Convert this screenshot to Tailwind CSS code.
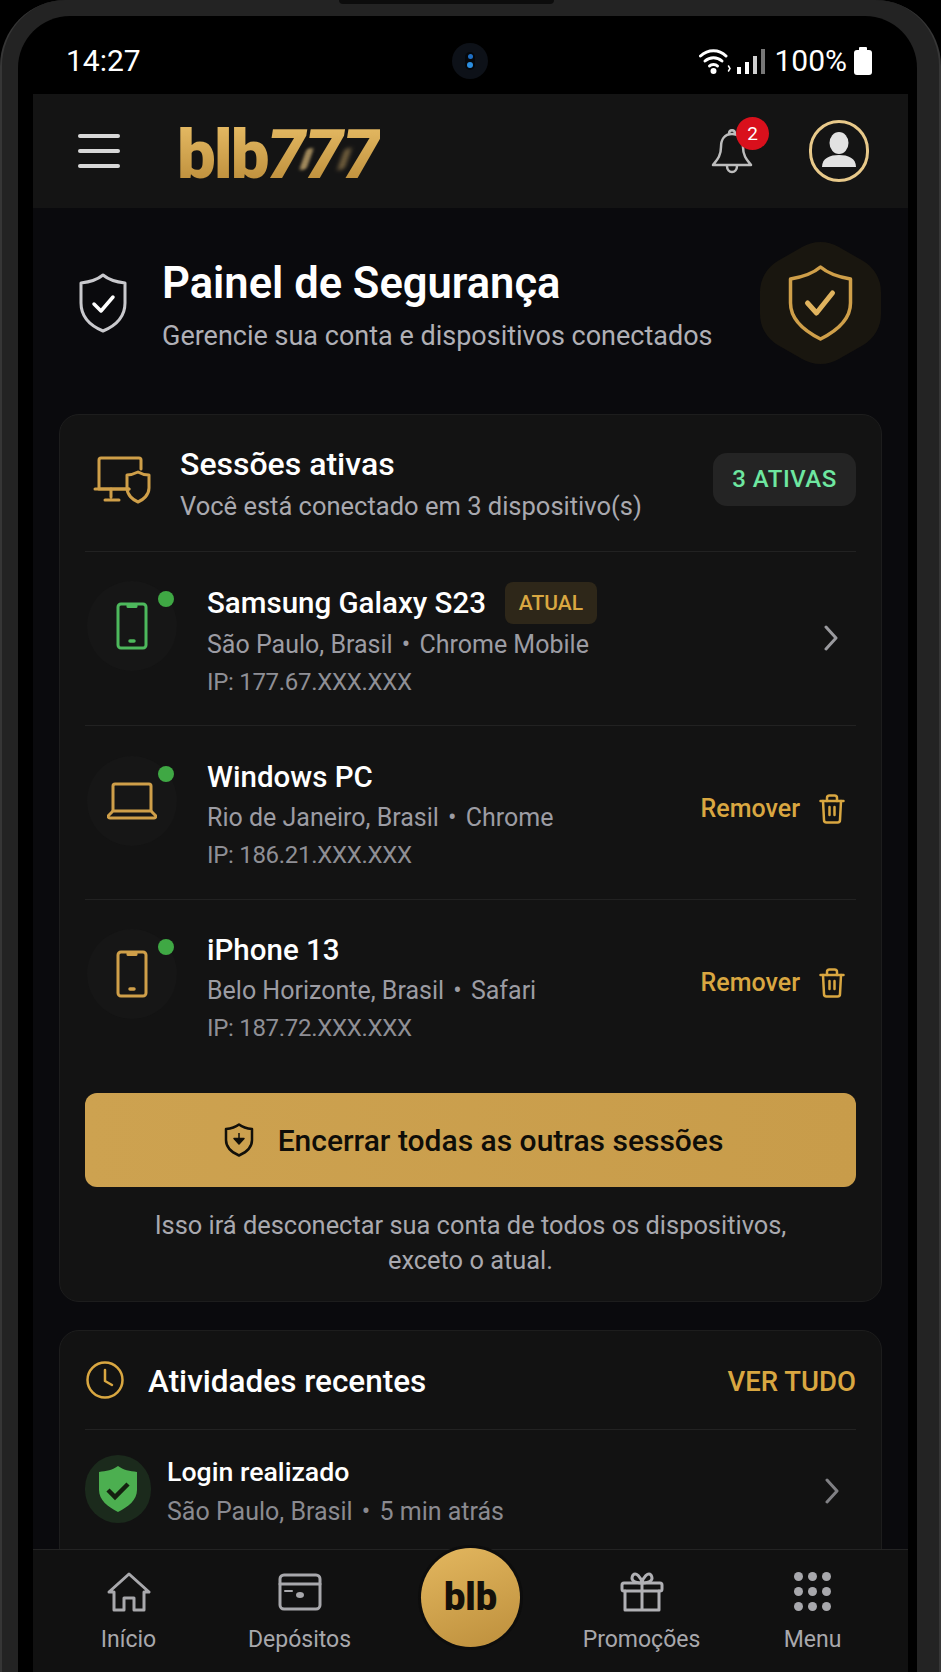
<!DOCTYPE html>
<html lang="pt-BR">

<head>
    <meta charset="UTF-8">
    <meta name="viewport" content="width=device-width, initial-scale=1.0">
    <title>Painel de Segurança</title>
    <script src="https://cdn.jsdelivr.net/npm/@tailwindcss/browser@4"></script>
</head>

<body class="bg-black">
    <!-- phone frame -->
    <div class="w-[941px] h-[1672px] overflow-hidden bg-black font-['Roboto',sans-serif]">
        <div class="w-full h-full rounded-t-[66px] bg-[#232323] border-x-2 border-[#363636] pt-[16px] pl-[16px] pr-[22px] relative">
            <div class="absolute top-0 left-[337px] w-[215px] h-[4px] rounded-b bg-[#0c0c0c]"></div>
            <div class="h-full rounded-t-[52px] bg-black pl-[15px] pr-[9px] overflow-hidden">

                <!-- status bar -->
                <div class="h-[78px] flex items-center relative text-white text-[30px] leading-[36px] pt-[12px]">
                    <span class="ml-[33px]">14:27</span>
                    <div class="absolute left-[419px] top-[27px] w-[36px] h-[36px] rounded-full bg-[#0d1118] flex items-center justify-center">
                        <div class="w-[10px] h-[18px] rounded-full bg-[#05080c] flex flex-col items-center justify-between py-[2px]">
                            <div class="w-[5px] h-[5px] rounded-full bg-[#1f6fc4]"></div>
                            <div class="w-[6px] h-[6px] rounded-full bg-[#2b8ee0]"></div>
                        </div>
                    </div>
                    <div class="ml-auto flex items-center mr-[36px]">
                        <svg class="w-[32px] h-[26px]" viewBox="0 0 32 26" fill="none" stroke="#fff" stroke-width="3" stroke-linecap="round">
                            <path d="M1.500 8C9 1 20 1 27 8" />
                            <path d="M6 13C11 8.500 18 8.500 23 13" />
                            <path d="M10.500 18C12.500 16 16.500 16 18.500 18" />
                            <circle cx="14.500" cy="23" r="1.500" fill="#fff" />
                            <path d="M29.500 18l1.500 2.500-1.500 2.500" stroke-width="1.500" />
                        </svg>
                        <svg class="w-[28px] h-[26px] ml-[6px]" viewBox="0 0 28 26" fill="#fff">
                            <rect x="0" y="19" width="4" height="7" />
                            <rect x="8" y="14" width="4" height="12" />
                            <rect x="16" y="8" width="4" height="18" fill="#cfcfcf" />
                            <rect x="24" y="1" width="4" height="25" fill="#777" />
                        </svg>
                        <span class="ml-[9px]">100%</span>
                        <svg class="w-[18px] h-[28px] ml-[7px]" viewBox="0 0 18 28" fill="#fff">
                            <rect x="5" y="0" width="8" height="4" rx="1" />
                            <rect x="0" y="3" width="18" height="25" rx="3" />
                        </svg>
                    </div>
                </div>

                <!-- header -->
                <div class="h-[114px] bg-[#141414] flex items-center relative">
                    <div class="ml-[45px] w-[42px] flex flex-col gap-[11px]">
                        <div class="h-[4px] rounded-full bg-[#d8d8d8]"></div>
                        <div class="h-[4px] rounded-full bg-[#d8d8d8]"></div>
                        <div class="h-[4px] rounded-full bg-[#d8d8d8]"></div>
                    </div>
                    <div class="ml-[57px] relative flex items-baseline leading-[70px] text-[69px] font-black tracking-[-2px] text-transparent bg-clip-text bg-[linear-gradient(180deg,#e8bd66,#b98a37)] mt-[8px]">
                        <span>blb</span><span class="italic tracking-[-1px] ml-[-1px]">777</span>
                        <div class="absolute left-[126px] top-[28px] w-[7px] h-[22px] -skew-x-[20deg] rounded-sm bg-[#d9b878]/70 blur-[1.5px]"></div>
                        <div class="absolute left-[164px] top-[28px] w-[7px] h-[22px] -skew-x-[20deg] rounded-sm bg-[#a98a55]/60 blur-[2px]"></div>
                    </div>
                    <div class="ml-auto relative w-[42px] h-[46px] mr-[56px]">
                        <svg class="w-[42px] h-[46px]" viewBox="0 0 42 46" fill="none" stroke="#bdbdbd" stroke-width="2.500" stroke-linejoin="round" stroke-linecap="round">
                            <path d="M21 6C13 6 10 12 10 19C10 28 6 32 2 37H40C36 32 32 28 32 19C32 12 29 6 21 6Z" />
                            <path d="M18 6C18 1 24 1 24 6" />
                            <path d="M16 38C16 46 26 46 26 38" />
                        </svg>
                        <div class="absolute left-[25px] top-[-11px] w-[33px] h-[33px] rounded-full bg-[#d9101c] text-white text-[19px] leading-[33px] text-center">2</div>
                    </div>
                    <div class="w-[60px] h-[62px] rounded-full border-[3px] border-[#e8c98a] mr-[39px] overflow-hidden flex items-center justify-center">
                        <svg class="w-[54px] h-[56px]" viewBox="0 0 54 56" fill="#e2e2e2">
                            <ellipse cx="27" cy="20" rx="9.500" ry="11" />
                            <path d="M10 44C10 35 18 32 27 32C36 32 44 35 44 44Z" />
                        </svg>
                    </div>
                </div>

                <!-- main -->
                <div class="h-[1341px] overflow-hidden bg-[#0a0a0d] px-[26px] pt-[32px]">

                    <div class="flex items-center h-[126px]">
                        <svg class="w-[48px] h-[60px] ml-[20px] shrink-0" viewBox="0 0 48 60" fill="none" stroke="#c9c9cd" stroke-width="3" stroke-linejoin="round" stroke-linecap="round">
                            <path d="M24 2C30 7 37 9 46 10V30C46 44 36 53 24 58C12 53 2 44 2 30V10C11 9 18 7 24 2Z" />
                            <path d="M15 31l7 7 12-14" stroke="#fff" stroke-width="3.500" />
                        </svg>
                        <div class="ml-[35px] mt-[8px]">
                            <h1 class="text-[43.500px] leading-[48px] font-semibold text-white">Painel de Segurança</h1>
                            <p class="text-[27px] leading-[36px] mt-[10px] text-[#b0b0b6]">Gerencie sua conta e dispositivos conectados</p>
                        </div>
                        <svg class="ml-auto w-[121px] h-[126px] shrink-0 mr-[1px]" viewBox="0 0 121 126">
                            <path d="M60.500 38L85 52V74L60.500 88L36 74V52Z" fill="#19160f" stroke="#19160f" stroke-width="72" stroke-linejoin="round" />
                            <g transform="translate(28.500 25)" fill="none" stroke="#cf9f49" stroke-width="3.500" stroke-linejoin="round" stroke-linecap="round">
                                <path d="M32 2C39 8 50 12 62 14V38C62 54 48 66 32 74C16 66 2 54 2 38V14C14 12 25 8 32 2Z" />
                                <path d="M19 38l9 10 16-20" stroke="#e0b35e" stroke-width="5" />
                            </g>
                        </svg>
                    </div>

                    <!-- active sessions -->
                    <div class="mt-[48px] rounded-[20px] bg-[#131313] border border-[#1d1d1d] px-[25px] pb-[23px]">
                        <div class="h-[136px] flex pt-[30px]">
                            <svg class="w-[58px] h-[48px] ml-[8px] mt-[11px] shrink-0" viewBox="0 0 58 48" fill="none" stroke="#cf9f49" stroke-width="3" stroke-linejoin="round" stroke-linecap="round">
                                <path d="M36 33H6V4C6 2.500 7 2 8 2H46C47 2 48 2.500 48 4V13" />
                                <path d="M2 33H36" />
                                <path d="M18 41V33M12 44H26" />
                                <path d="M34 19C39 19 45 16 45 16C45 16 50 19 56 19V32C56 39 50 44 45 46C40 44 34 39 34 32Z" />
                            </svg>
                            <div class="ml-[29px]">
                                <h2 class="text-[32px] leading-[38px] font-medium text-white">Sessões ativas</h2>
                                <p class="text-[25.500px] leading-[38px] mt-[4px] text-[#a9a9af]">Você está conectado em 3 dispositivo(s)</p>
                            </div>
                            <div class="ml-auto mt-[8px] h-[53px] w-[143px] rounded-[14px] bg-[#242424] text-[#6ee7a0] text-[24px] leading-[53px] font-medium text-center tracking-[0.5px]">3 ATIVAS</div>
                        </div>

                        <!-- devices -->
                        <div class="h-[174px] border-t border-[#222222] flex items-center relative">
                            <div class="self-start mt-[29px] ml-[2px] w-[90px] h-[90px] rounded-full bg-[#161616] flex items-center justify-center relative shrink-0">
                                <svg class="w-[32px] h-[48px]" viewBox="0 0 32 48" fill="none" stroke="#4db85c" stroke-width="3" stroke-linejoin="round">
                                    <rect x="2" y="2" width="28" height="44" rx="3" />
                                    <path d="M12 2.500h8v2h-8z" fill="#4db85c" />
                                    <path d="M14 39h4" stroke-width="3.500" stroke-linecap="round" />
                                </svg>
                                <div class="absolute left-[71px] top-[10px] w-[16px] h-[16px] rounded-full bg-[#3fa844]"></div>
                            </div>
                            <div class="self-start ml-[30px] pt-[33px]">
                                <div class="flex items-center h-[36px]">
                                    <span class="text-[29.500px] leading-[36px] font-medium text-white">Samsung Galaxy S23</span>
                                    <span class="ml-[19px] h-[42px] w-[92px] rounded-[8px] bg-[#2e2719] text-[#d9a741] text-[21px] leading-[42px] font-medium text-center">ATUAL</span>
                                </div>
                                <p class="text-[25px] leading-[38px] mt-[5px] text-[#9c9ca3]">São Paulo, Brasil<span class="mx-[3px]"> • </span>Chrome Mobile</p>
                                <p class="text-[24px] leading-[38px] mt-[-1px] tracking-[-0.3px] text-[#8f8f95]">IP: 177.67.XXX.XXX</p>
                            </div>
                            <svg class="ml-auto mr-[18px] mb-[2px] w-[14px] h-[26px]" viewBox="0 0 14 26" fill="none" stroke="#9a9a9e" stroke-width="3" stroke-linecap="round" stroke-linejoin="round">
                                <path d="M2 2l10 11-10 11" />
                            </svg>
                        </div>

                        <div class="h-[174px] border-t border-[#222222] flex items-center relative">
                            <div class="self-start mt-[30px] ml-[2px] w-[90px] h-[90px] rounded-full bg-[#161616] flex items-center justify-center relative shrink-0">
                                <svg class="w-[50px] h-[38px]" viewBox="0 0 50 38" fill="none" stroke="#cf9f49" stroke-width="3" stroke-linejoin="round">
                                    <path d="M6 29V4C6 2.500 7 2 8 2H42C43 2 44 2.500 44 4V29" />
                                    <path d="M6 29H44L49 34C49 35 48 36 47 36H3C2 36 1 35 1 34Z" />
                                </svg>
                                <div class="absolute left-[71px] top-[10px] w-[16px] h-[16px] rounded-full bg-[#3fa844]"></div>
                            </div>
                            <div class="self-start ml-[30px] pt-[33px]">
                                <p class="text-[29.500px] leading-[36px] font-medium text-white">Windows PC</p>
                                <p class="text-[25px] leading-[38px] mt-[4px] text-[#9c9ca3]">Rio de Janeiro, Brasil<span class="mx-[3px]"> • </span>Chrome</p>
                                <p class="text-[24px] leading-[38px] mt-[-1px] tracking-[-0.3px] text-[#8f8f95]">IP: 186.21.XXX.XXX</p>
                            </div>
                            <div class="ml-auto mr-[11px] mb-[7px] flex items-center gap-[19px]">
                                <span class="text-[25px] leading-[32px] font-medium text-[#d9a741]">Remover</span>
                                <svg class="w-[26px] h-[30px]" viewBox="0 0 26 30" fill="none" stroke="#d9a741" stroke-width="2.500" stroke-linejoin="round" stroke-linecap="round">
                                    <path d="M1.500 7H24.500" />
                                    <path d="M8 7V4C8 2.500 9 1.500 10.500 1.500H15.500C17 1.500 18 2.500 18 4V7" />
                                    <path d="M4 7L5 26C5 27.500 6 28.500 7.500 28.500H18.500C20 28.500 21 27.500 21 26L22 7" />
                                    <path d="M10.500 13V21M15.500 13V21" />
                                </svg>
                            </div>
                        </div>

                        <div class="h-[173px] border-t border-[#222222] flex items-center relative">
                            <div class="self-start mt-[29px] ml-[2px] w-[90px] h-[90px] rounded-full bg-[#161616] flex items-center justify-center relative shrink-0">
                                <svg class="w-[32px] h-[48px]" viewBox="0 0 32 48" fill="none" stroke="#cf9f49" stroke-width="3" stroke-linejoin="round">
                                    <rect x="2" y="2" width="28" height="44" rx="3" />
                                    <path d="M12 2.500h8v2h-8z" fill="#cf9f49" />
                                    <path d="M14 39h4" stroke-width="3.500" stroke-linecap="round" />
                                </svg>
                                <div class="absolute left-[71px] top-[10px] w-[16px] h-[16px] rounded-full bg-[#3fa844]"></div>
                            </div>
                            <div class="self-start ml-[30px] pt-[32px]">
                                <p class="text-[29.500px] leading-[36px] font-medium text-white">iPhone 13</p>
                                <p class="text-[25px] leading-[38px] mt-[4px] text-[#9c9ca3]">Belo Horizonte, Brasil<span class="mx-[3px]"> • </span>Safari</p>
                                <p class="text-[24px] leading-[38px] mt-[-1px] tracking-[-0.3px] text-[#8f8f95]">IP: 187.72.XXX.XXX</p>
                            </div>
                            <div class="ml-auto mr-[11px] mb-[6px] flex items-center gap-[19px]">
                                <span class="text-[25px] leading-[32px] font-medium text-[#d9a741]">Remover</span>
                                <svg class="w-[26px] h-[30px]" viewBox="0 0 26 30" fill="none" stroke="#d9a741" stroke-width="2.500" stroke-linejoin="round" stroke-linecap="round">
                                    <path d="M1.500 7H24.500" />
                                    <path d="M8 7V4C8 2.500 9 1.500 10.500 1.500H15.500C17 1.500 18 2.500 18 4V7" />
                                    <path d="M4 7L5 26C5 27.500 6 28.500 7.500 28.500H18.500C20 28.500 21 27.500 21 26L22 7" />
                                    <path d="M10.500 13V21M15.500 13V21" />
                                </svg>
                            </div>
                        </div>

                        <button class="mt-[21px] w-full h-[94px] rounded-[12px] bg-[linear-gradient(90deg,#cda250,#c89c4a)] flex items-center justify-center pl-[6px] text-[#0f0d08] text-[30px] font-medium">
                            <svg class="w-[30px] h-[34px] mr-[24px]" viewBox="0 0 30 34" fill="none" stroke="#12100a" stroke-width="2.500" stroke-linejoin="round">
                                <path d="M15 1.500C19 4.500 23 5.500 28 6V17C28 25 22 29.500 15 32.500C8 29.500 2 25 2 17V6C7 5.500 11 4.500 15 1.500Z" />
                                <path d="M15 10V20M10 15.500L15 21L20 15.500Z" fill="#12100a" stroke-width="1.500" />
                            </svg>
                            Encerrar todas as outras sessões
                        </button>
                        <p class="mt-[21px] text-center text-[25.400px] leading-[35px] text-[#a9a9af]">Isso irá desconectar sua conta de todos os dispositivos,<br>exceto o atual.</p>
                    </div>

                    <!-- recent activity -->
                    <div class="mt-[28px] rounded-t-[20px] bg-[#121212] border border-[#1d1d1d] px-[25px] h-[300px]">
                        <div class="h-[99px] border-b border-[#222222] flex items-center">
                            <svg class="w-[38px] h-[38px] ml-[1px] shrink-0" viewBox="0 0 38 38" fill="none" stroke="#d9a741" stroke-width="2.500" stroke-linecap="round" stroke-linejoin="round">
                                <circle cx="19" cy="19" r="17.500" />
                                <path d="M19 9V20L26 24" />
                            </svg>
                            <h2 class="ml-[24px] mt-[3px] text-[31.500px] leading-[40px] font-medium text-white">Atividades recentes</h2>
                            <span class="ml-auto mt-[4px] text-[27.500px] leading-[36px] font-medium text-[#d9a741]">VER TUDO</span>
                        </div>
                        <div class="flex items-start pt-[25px]">
                            <div class="w-[66px] h-[68px] rounded-full bg-[#1b2a1c] flex items-center justify-center shrink-0">
                                <svg class="w-[38px] h-[46px]" viewBox="0 0 38 46" fill="#4caf50">
                                    <path d="M19 0C24 4 31 5 38 6V24C38 34 29 41 19 46C9 41 0 34 0 24V6C7 5 14 4 19 0Z" />
                                    <path d="M9 24l7 7 13-13" fill="none" stroke="#14200f" stroke-width="4.500" />
                                </svg>
                            </div>
                            <div class="ml-[16px]">
                                <p class="text-[26.700px] leading-[34px] font-medium text-white">Login realizado</p>
                                <p class="text-[25px] leading-[36px] mt-[5px] text-[#8a8a90]">São Paulo, Brasil<span class="mx-[3px]"> • </span>5 min atrás</p>
                            </div>
                            <svg class="ml-auto mr-[17px] mt-[23px] w-[14px] h-[26px]" viewBox="0 0 14 26" fill="none" stroke="#808084" stroke-width="3" stroke-linecap="round" stroke-linejoin="round">
                                <path d="M2 2l10 11-10 11" />
                            </svg>
                        </div>
                    </div>
                </div>

                <!-- bottom nav -->
                <div class="h-[123px] bg-[#111111] border-t border-[#232323] grid grid-cols-5 px-[10px] text-[#a8a8ac] text-[23px] leading-[30px]">
                    <div class="flex flex-col items-center pt-[22px]">
                        <svg class="w-[44px] h-[40px]" viewBox="0 0 44 40" fill="none" stroke="#a8a8ac" stroke-width="3" stroke-linejoin="round" stroke-linecap="round">
                            <path d="M2 20L22 2L42 20H37V38H27V26H17V38H7V20Z" />
                        </svg>
                        <span class="mt-[13px]">Início</span>
                    </div>
                    <div class="flex flex-col items-center pt-[22px]">
                        <svg class="w-[44px] h-[40px]" viewBox="0 0 44 40" fill="none" stroke="#a8a8ac" stroke-width="3" stroke-linejoin="round" stroke-linecap="round">
                            <rect x="2" y="3" width="40" height="34" rx="4" />
                            <path d="M2 12H42" />
                            <path d="M7 19H14" stroke-width="2" />
                            <ellipse cx="22" cy="23" rx="2.500" ry="1.500" fill="#a8a8ac" />
                        </svg>
                        <span class="mt-[13px]">Depósitos</span>
                    </div>
                    <div class="flex justify-center">
                        <div class="mt-[-2px] w-[99px] h-[99px] shrink-0 rounded-full bg-[linear-gradient(160deg,#e3b75f,#bd8f3c)] text-[#14100a] text-[38px] leading-[99px] font-black text-center ring-[3px] ring-[#0d0d0d]">blb</div>
                    </div>
                    <div class="flex flex-col items-center pt-[22px]">
                        <svg class="w-[44px] h-[40px]" viewBox="0 0 44 40" fill="none" stroke="#b0b0b4" stroke-width="3" stroke-linejoin="round" stroke-linecap="round">
                            <rect x="2" y="11" width="40" height="8" rx="2" />
                            <path d="M5 19V38H39V19M22 11V38" />
                            <path d="M22 11C14 11 10 8 13 3C16 0 21 5 22 11C23 5 28 0 31 3C34 8 30 11 22 11Z" />
                        </svg>
                        <span class="mt-[13px]">Promoções</span>
                    </div>
                    <div class="flex flex-col items-center pt-[22px]">
                        <div class="grid grid-cols-3 gap-x-[5px] gap-y-[4.500px] w-[38px] h-[40px]">
                            <div class="w-[9px] h-[9px] rounded-full bg-[#a8a8ac]"></div>
                            <div class="w-[9px] h-[9px] rounded-full bg-[#a8a8ac]"></div>
                            <div class="w-[9px] h-[9px] rounded-full bg-[#a8a8ac]"></div>
                            <div class="w-[9px] h-[9px] rounded-full bg-[#a8a8ac]"></div>
                            <div class="w-[9px] h-[9px] rounded-full bg-[#a8a8ac]"></div>
                            <div class="w-[9px] h-[9px] rounded-full bg-[#a8a8ac]"></div>
                            <div class="w-[9px] h-[9px] rounded-full bg-[#a8a8ac]"></div>
                            <div class="w-[9px] h-[9px] rounded-full bg-[#a8a8ac]"></div>
                            <div class="w-[9px] h-[9px] rounded-full bg-[#a8a8ac]"></div>
                        </div>
                        <span class="mt-[13px]">Menu</span>
                    </div>
                </div>
            </div>
        </div>
    </div>
</body>

</html>
